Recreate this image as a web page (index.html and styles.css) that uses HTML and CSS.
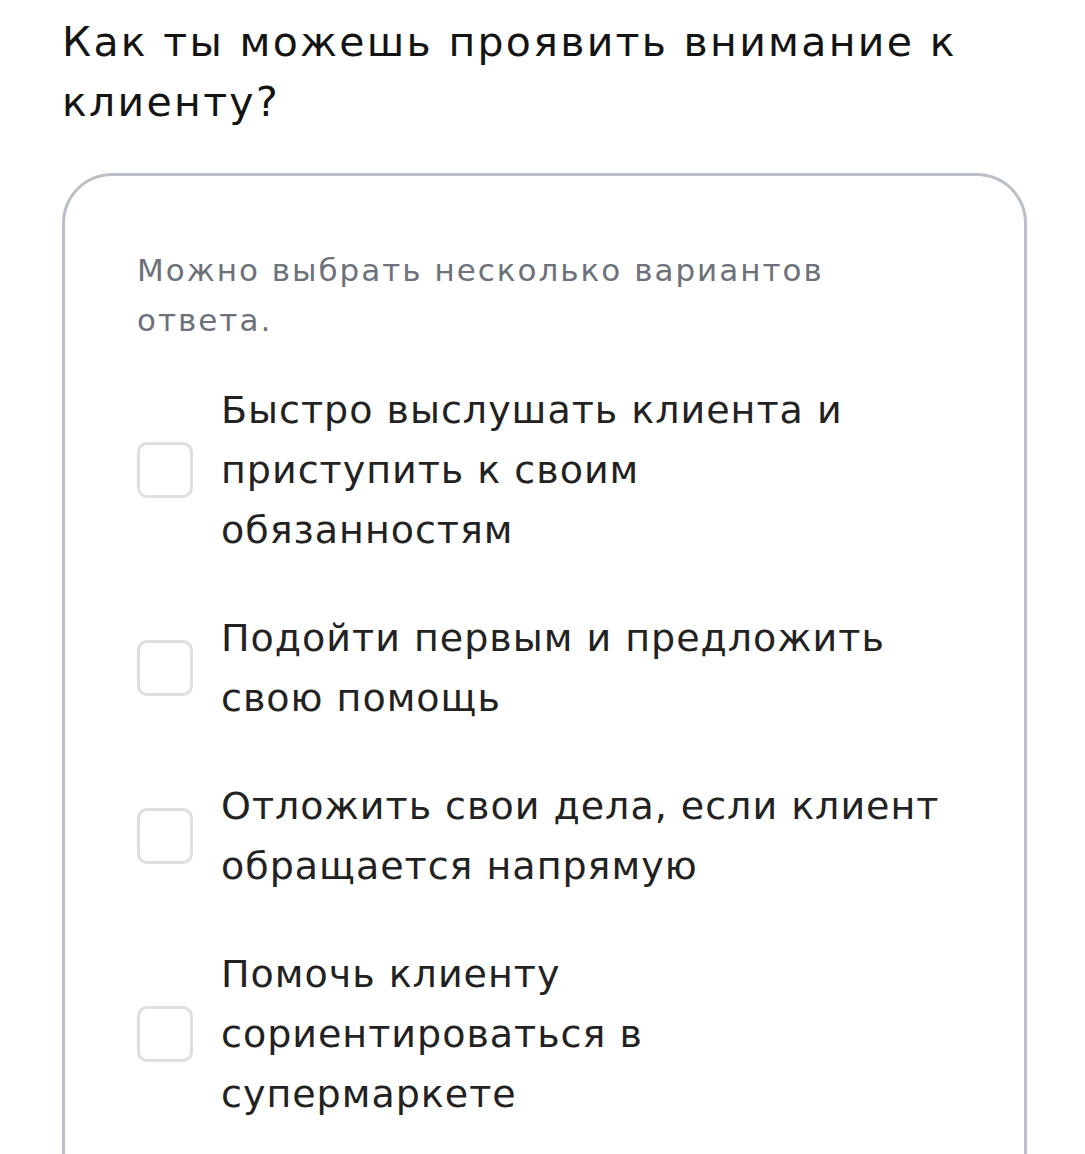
FILE: index.html
```html
<!DOCTYPE html>
<html lang="ru">
<head>
    <meta charset="UTF-8">
    <meta name="viewport" content="width=device-width, initial-scale=1.0">
    <title>Вопрос</title>
    <link rel="stylesheet" href="styles.css">
</head>
<body>

    <div class="page">
        <h1 class="question">Как ты можешь проявить внимание к клиенту?</h1>

        <div class="card">
            <p class="hint">Можно выбрать несколько вариантов ответа.</p>

            <label class="option">
                <input type="checkbox">
                <span class="box"></span>
                <span class="option-text">Быстро выслушать клиента и приступить к своим обязанностям</span>
            </label>

            <label class="option">
                <input type="checkbox">
                <span class="box"></span>
                <span class="option-text">Подойти первым и предложить свою помощь</span>
            </label>

            <label class="option">
                <input type="checkbox">
                <span class="box"></span>
                <span class="option-text">Отложить свои дела, если клиент обращается напрямую</span>
            </label>

            <label class="option">
                <input type="checkbox">
                <span class="box"></span>
                <span class="option-text">Помочь клиенту сориентироваться в супермаркете</span>
            </label>
        </div>
    </div>

</body>
</html>
```

FILE: styles.css
```css
* {
    margin: 0;
    padding: 0;
    box-sizing: border-box;
}

body {
    background: #ffffff;
    font-family: "DejaVu Sans", "Noto Sans", sans-serif;
    overflow: hidden;
}

.page {
    padding: 12px 0 0 62px;
}

.question {
    font-size: 41px;
    font-weight: normal;
    line-height: 60px;
    letter-spacing: 2.3px;
    color: #141414;
    max-width: 980px;
}

.card {
    margin-top: 41px;
    width: 965px;
    min-height: 1100px;
    border: 3px solid #babec6;
    border-bottom: none;
    border-radius: 50px 50px 0 0;
    padding: 69px 64px 0 72px;
}

.hint {
    font-size: 31px;
    line-height: 50px;
    letter-spacing: 2px;
    color: #6d7179;
    max-width: 760px;
    margin-bottom: 35px;
}

.option {
    display: flex;
    align-items: center;
    gap: 28px;
    margin-bottom: 48px;
    cursor: pointer;
}

.option input {
    display: none;
}

.box {
    flex: none;
    width: 56px;
    height: 56px;
    border: 3px solid #dedfe1;
    border-radius: 10px;
    background: #fff;
}

.option input:checked + .box {
    background: #2b2b2b;
    border-color: #2b2b2b;
}

.option-text {
    font-size: 38px;
    line-height: 60px;
    letter-spacing: 1px;
    color: #222222;
    max-width: 719px;
}
```
